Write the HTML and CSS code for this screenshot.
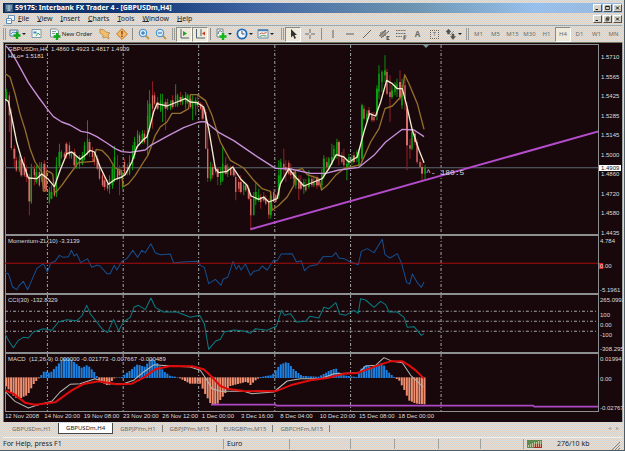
FILE: index.html
```html
<!DOCTYPE html>
<html lang="en">
<head>
<meta charset="utf-8">
<title>59175: Interbank FX Trader 4 - [GBPUSDm,H4]</title>
<link rel="stylesheet" href="styles.css">
</head>
<body>
<header class="titlebar">
  <svg class="app-icon" viewBox="0 0 8 8"><path d="M0 0h8v8H0z" fill="#3c5c7c"/><path d="M1 2h6M1 4h6M2 6h4M4 1v6" stroke="#a8c8d8" stroke-width="1"/></svg>
  <h1>59175: Interbank FX Trader 4 - [GBPUSDm,H4]</h1>
  <div class="winbtns">
    <button aria-label="Minimize"><svg viewBox="0 0 9 8"><path d="M2 6h3" stroke="#000" stroke-width="1.4"/></svg></button>
    <button aria-label="Maximize"><svg viewBox="0 0 9 8"><path d="M2 2h5v4H2zM2 1.6h5" fill="none" stroke="#000"/></svg></button>
    <button aria-label="Close"><svg viewBox="0 0 9 8"><path d="M2.500 2l4 4M6.500 2l-4 4" stroke="#000" stroke-width="1.2"/></svg></button>
  </div>
</header>
<nav class="menubar">
  <svg class="doc-icon" viewBox="0 0 9 9"><path d="M2.500 .5h6v5h-6z" fill="#eef4f8" stroke="#6c94b4"/><path d="M.5 3.500h5v5h-5z" fill="#fff" stroke="#5c8cb4"/><path d="M1.500 6l1-1 1 1 1-1" fill="none" stroke="#4878a0" stroke-width=".7"/></svg>
  <a href="#"><u>F</u>ile</a><a href="#"><u>V</u>iew</a><a href="#"><u>I</u>nsert</a><a href="#"><u>C</u>harts</a><a href="#"><u>T</u>ools</a><a href="#"><u>W</u>indow</a><a href="#"><u>H</u>elp</a>
  <div class="winbtns">
    <button aria-label="Minimize chart"><svg viewBox="0 0 9 8"><path d="M2 6h3" stroke="#000" stroke-width="1.4"/></svg></button>
    <button aria-label="Restore chart"><svg viewBox="0 0 9 8"><path d="M3.500 1.500h3v3h-3zM2.500 3.500h3v3h-3z" fill="#d4d0c8" stroke="#000" stroke-width=".8"/></svg></button>
    <button aria-label="Close chart"><svg viewBox="0 0 9 8"><path d="M2.500 2l4 4M6.500 2l-4 4" stroke="#000" stroke-width="1.2"/></svg></button>
  </div>
</nav>
<div class="toolbar">
  <div class="group files">
    <i class="grip"></i>
    <button class="drop" aria-label="New chart"><svg viewBox="0 0 12 12"><path d="M1 2h8v6H1z" fill="#dceaf2" stroke="#5c7c94"/><path d="M2 6l2-2 2 1 2-2" fill="none" stroke="#5c94c4"/><path d="M8 4v7M4.500 7.500h7" stroke="#10a818" stroke-width="2.4"/></svg></button>
    <button aria-label="Profiles"><svg viewBox="0 0 12 12"><path d="M1 1.500h9v8H1z" fill="#f4f4ec" stroke="#7c9cac"/><path d="M2.500 3.500h3v2h-3z" fill="#3c8cc8"/><path d="M5 8l2-3 2 2" fill="none" stroke="#38a860"/></svg></button>
    <button class="order"><svg viewBox="0 0 12 12"><path d="M1.500 1h6l2 2v6h-8z" fill="#f4f4f0" stroke="#8494a0"/><path d="M3 3.500h4M3 5.500h3" stroke="#7c9cb8"/><path d="M8 5v7M4.500 8.500h7" stroke="#10a818" stroke-width="2.4"/></svg>New Order</button>
    <button aria-label="Expert list"><svg viewBox="0 0 12 12"><path d="M1 1l4 1 2 2 4 1-2 2 1 4-3-2-3 1V7L1 5z" fill="#f0c070" stroke="#b88440" stroke-width=".8"/></svg></button>
    <button aria-label="Expert advisors"><svg viewBox="0 0 12 12"><path d="M6 .6L11.400 6 6 11.400 .6 6z" fill="#f4b868" stroke="#c07828"/><path d="M6 3v3.500M6 7.500V9" stroke="#8c4410" stroke-width="1.500"/></svg></button>
    <i class="sep"></i>
    <button aria-label="Zoom in"><svg viewBox="0 0 12 12"><path d="M7.500 7.500L11 11" stroke="#c8984c" stroke-width="2"/><circle cx="5" cy="5" r="3.800" fill="#d4ecfc" stroke="#3c88c8"/><path d="M5 3v4M3 5h4" stroke="#2468a8"/></svg></button>
    <button aria-label="Zoom out"><svg viewBox="0 0 12 12"><path d="M7.500 7.500L11 11" stroke="#c8984c" stroke-width="2"/><circle cx="5" cy="5" r="3.800" fill="#d4ecfc" stroke="#3c88c8"/><path d="M3 5h4" stroke="#2468a8"/></svg></button>
  </div>
  <div class="group views">
    <i class="grip"></i>
    <button class="on" aria-label="Auto scroll"><svg viewBox="0 0 12 12"><path d="M3 1v9h8" fill="none" stroke="#4c6470"/><path d="M5 3l4 2.500L5 8z" fill="#20a030"/></svg></button>
    <button class="on" aria-label="Chart shift"><svg viewBox="0 0 12 12"><path d="M2.500 1v9H11M7 1v7" fill="none" stroke="#4c6470"/><path d="M11 3.500L8 5.500l3 2z" fill="#c83020"/></svg></button>
    <i class="sep"></i>
    <button class="drop" aria-label="Indicators"><svg viewBox="0 0 12 12"><path d="M2 1h6v8H2z" fill="#f0f0ec" stroke="#748894"/><path d="M3 6c1-4 2-4 4-2" fill="none" stroke="#4c6474"/><path d="M8 5v7M4.500 8.500h7" stroke="#10b818" stroke-width="2.4"/></svg></button>
    <button class="drop" aria-label="Periods"><svg viewBox="0 0 12 12"><circle cx="6" cy="6" r="4.600" fill="#f4f8fc" stroke="#2468b8" stroke-width="1.800"/><path d="M6 3v3h2.500" fill="none" stroke="#34546c"/></svg></button>
    <button class="drop" aria-label="Templates"><svg viewBox="0 0 12 12"><path d="M1 1.500h10v8.500H1z" fill="#f4f4f0" stroke="#6c8ca4"/><path d="M1 2.500h10" stroke="#4c84bc" stroke-width="1.500"/><path d="M2.500 6l2-1 2 .5 3-1" fill="none" stroke="#c85c40"/><path d="M2.500 8.500l3-1 4 .5" fill="none" stroke="#3ca060"/></svg></button>
  </div>
  <div class="group draw">
    <i class="grip"></i>
    <button class="on" aria-label="Cursor"><svg viewBox="0 0 12 12"><path d="M4 1v8.500l2-2L7.500 11 9 10 7.500 7H10z" fill="#303030"/></svg></button>
    <button class="wide" aria-label="Crosshair"><svg viewBox="0 0 12 12"><path d="M6 1v4M6 7v4M1 6h4M7 6h4" stroke="#6c6c68"/></svg></button>
    <i class="sep"></i>
    <button aria-label="Vertical line"><svg viewBox="0 0 12 12"><path d="M6 2v8" stroke="#60605c"/></svg></button>
    <button aria-label="Horizontal line"><svg viewBox="0 0 12 12"><path d="M2 6h8" stroke="#60605c"/></svg></button>
    <button aria-label="Trendline"><svg viewBox="0 0 12 12"><path d="M2 10l8-8" stroke="#60605c"/></svg></button>
    <button aria-label="Channel"><svg viewBox="0 0 12 12"><path d="M1 8l7-6M3 10l8-7M3 4v5M5 3v6M7 2v6" stroke="#60605c"/><path d="M9 8v4M9 8.500h2.500M9 10h2M9 11.500h2.500" stroke="#404040" stroke-width=".8"/></svg></button>
    <button aria-label="Fibonacci"><svg viewBox="0 0 12 12"><path d="M1 2.500h10M1 5.500h10M1 8.500h6" stroke="#60605c" stroke-dasharray="1 .6"/><path d="M9 7.500V12M9 8h2.500M9 10h2" stroke="#404040" stroke-width=".8"/></svg></button>
    <button aria-label="Text"><b>A</b></button>
    <button aria-label="Text label"><span class="tlabel">T</span></button>
    <button class="drop" aria-label="Arrows"><svg viewBox="0 0 12 12"><path d="M3.500 1l2.500 3H4.500v2H2.500V4H1zM9 6v2.500h1.500L8 11.500 5.500 8.500H7V6zM5 7l4-4" fill="#50504c" stroke="#50504c" stroke-width=".5"/></svg></button>
  </div>
  <div class="group frames">
    <i class="grip"></i>
    <button>M1</button><button>M5</button><button>M15</button><button>M30</button><button>H1</button><button class="on">H4</button><button>D1</button><button>W1</button><button>MN</button>
  </div>
</div>

<main class="chart">
  <section class="panel price">
    <div class="plot">
      <svg id="price" viewBox="15 9 1776 567" preserveAspectRatio="none"></svg>
      <p class="legend">GBPUSDm,H4&nbsp; 1.4860 1.4923 1.4817 1.4909<br>HiLo= 1.5181</p>
      <span class="pips">^- 180:5</span>
      <i class="shift"></i>
    </div>
    <div class="axis"><span>1.5710</span><span>1.5565</span><span>1.5425</span><span>1.5285</span><span>1.5145</span><span>1.5000</span><span>1.4860</span><span>1.4720</span><span>1.4580</span><span>1.4435</span><b class="now">1.4909</b></div>
  </section>
  <section class="panel sub">
    <div class="plot">
      <svg id="momentum" viewBox="15 12 1776 171" preserveAspectRatio="none"></svg>
      <p class="legend">Momentum-ZL(10) -3.3139</p>
    </div>
    <div class="axis"><span>4.784</span><span class="zero">0.00</span><span>-5.1961</span></div>
  </section>
  <section class="panel sub">
    <div class="plot">
      <svg id="cci" viewBox="15 189 1776 171" preserveAspectRatio="none"></svg>
      <p class="legend">CCI(30) -132.8329</p>
    </div>
    <div class="axis"><span>265.0992</span><div class="levels"><span>100</span><span>0.00</span><span>-100</span></div><span>-308.295</span></div>
  </section>
  <section class="panel sub last">
    <div class="plot">
      <svg id="macd" viewBox="15 366 1776 171" preserveAspectRatio="none"></svg>
      <p class="legend">MACD&nbsp; (12,26,9) 0.000000 -0.021773 -0.007667 -0.000489</p>
    </div>
    <div class="axis macd"><span>0.01994</span><span class="mid">0.00</span><span>-0.02767</span></div>
  </section>
  <div class="dates"><span>12 Nov 2008</span><span>14 Nov 20:00</span><span>19 Nov 08:00</span><span>23 Nov 20:00</span><span>26 Nov 12:00</span><span>1 Dec 00:00</span><span>3 Dec 16:00</span><span>8 Dec 04:00</span><span>10 Dec 20:00</span><span>15 Dec 08:00</span><span>18 Dec 00:00</span></div>
</main>

<nav class="tabs">
  <button>GBPUSDm,H1</button><button class="active">GBPUSDm,H4</button><button>GBPJPYm,H1</button><button>GBPJPYm,M15</button><button>EURGBPm,M15</button><button>GBPCHFm,M15</button>
  <span class="scroll"><button aria-label="Scroll left">◂</button><button aria-label="Scroll right">▸</button></span>
</nav>
<footer class="status">
  <span>For Help, press F1</span><span>Euro</span><span></span><span></span><span></span><span></span><span></span>
  <span class="net"><svg viewBox="0 0 15 8"><path d="M0 0h15v8H0z" fill="#5c8c50"/><path d="M7 8V4h8v4z" fill="#b02828"/><path d="M1.500 7V5M3.500 7V4M5.500 7V3M7.500 7V2M9.500 7V2M11.500 7V1M13.500 7V1" stroke="#e8e0c0" stroke-width=".7"/></svg>276/10 kb</span>
  <svg class="resize" viewBox="0 0 8 8"><path d="M0 8l8-8M3 8l5-5M6 8l2-2" stroke="#84847c"/></svg>
</footer>
<script src="chart.js"></script>
</body>
</html>
```
FILE: styles.css
```css
* { box-sizing: border-box; }

:root {
  --dither: repeating-conic-gradient(#f0dcc8 0 25%, #ccd4d8 0 50%) 0 0 / 2px 2px;
  --face: #d6d3cb;
  --bg: #18080c;
  --frame: #8c9090;
}

body {
  margin: 0;
  height: 100vh;
  display: flex;
  flex-direction: column;
  padding: 3px 2px 0 3px;
  border-right: 1px solid #505c64;
  border-bottom: 1px solid #505c64;
  background: var(--dither);
  color: #20262a;
  font: 7px/8px "Noto Sans", "Liberation Sans", sans-serif;
  overflow: hidden;
}

button {
  margin: 0;
  padding: 0;
  border: 0;
  background: none;
  color: inherit;
  font: inherit;
}

/* title and menu */
.titlebar {
  flex: none;
  height: 10px;
  display: flex;
  align-items: center;
  gap: 2px;
  padding-left: 2px;
  background: linear-gradient(90deg, #0c2c60, #123878 22%, #4468a4 42%, #6c94b0 66%, #98c0ec 86%, #98b8dc);
  color: #fff;
}
.titlebar h1 { margin: 0; font-size: 7px; line-height: 10px; font-weight: 700; white-space: nowrap; }
.app-icon { width: 8px; height: 8px; }
.winbtns { margin-left: auto; display: flex; gap: 1px; }
.winbtns button { width: 9px; height: 8px; background: var(--face); border: 1px solid; border-color: #fff #50504c #50504c #fff; }
.winbtns svg { display: block; width: 7px; height: 6px; }
.menubar {
  flex: none;
  height: 13px;
  display: flex;
  align-items: center;
  gap: 8px;
  padding-left: 3px;
  border-bottom: 1px solid #a4a8a4;
}
.menubar a { color: inherit; text-decoration: none; }
.menubar u { text-decoration-thickness: 1px; text-underline-offset: 0; }
.doc-icon { width: 9px; height: 9px; margin-right: -5px; }

/* toolbar */
.toolbar { flex: none; height: 16px; display: flex; align-items: center; font-size: 6px; }
.group { display: flex; align-items: center; height: 16px; }
.files { width: 169px; }
.views { width: 109px; }
.draw { width: 185px; }
.grip { flex: none; width: 3px; height: 12px; margin-right: 1px; border: solid #9c9c98; border-width: 0 1px; }
.sep { flex: none; width: 1px; height: 12px; margin: 0 2px; background: #8c8c88; }
.toolbar button { flex: none; width: 17px; height: 15px; display: flex; align-items: center; justify-content: center; color: #6c6c68; }
.toolbar svg { flex: none; width: 12px; height: 12px; }
.toolbar .drop { width: 21px; gap: 1px; }
.drop::after { content: ""; border: 2px solid transparent; border-top-color: #202020; border-bottom: 0; }
.toolbar .order { width: 51px; gap: 1px; color: #20262a; }
.toolbar .wide { width: 18px; }
.toolbar .on { width: 16px; background: #efe9da; border: 1px solid; border-color: #8c8c84 #fff #fff #8c8c84; }
.toolbar b { font-size: 8px; }
.tlabel { border: 1px dotted #60605c; width: 9px; height: 9px; line-height: 7px; }
.frames { flex: 1; }

/* chart */
.chart {
  flex: 1;
  min-height: 0;
  display: flex;
  flex-direction: column;
  margin-right: -1px;
  padding: 2px 0 1px 2px;
  background: var(--bg);
  border-right: 1px solid #a0a4a4;
  box-shadow: inset 1px 1px #707870;
  color: #dcdcdc;
  font-family: "Liberation Sans", sans-serif;
  font-size: 6px;
}
.panel { display: flex; min-height: 0; }
.price { flex: 192 1 0; }
.sub { flex: 59 1 0; }
.last { flex-grow: 58; }
.plot {
  flex: 1;
  min-width: 0;
  position: relative;
  border-bottom: 2px solid var(--frame);
  border-right: 1px solid var(--frame);
  box-shadow: inset 1px 0 var(--frame);
}
.price .plot { border-top: 1px solid var(--frame); }
.last .plot { border-bottom-width: 1px; }
.plot svg { display: block; width: 100%; height: 100%; }
.legend { position: absolute; left: 3px; top: 2px; margin: 0; line-height: 7px; white-space: nowrap; }
.price .legend { top: 1px; }
.pips { position: absolute; left: 71%; top: 65%; font: 8px/9px "Liberation Mono", monospace; white-space: pre; }
.shift { position: absolute; left: 70.500%; top: 0; border: 3px solid transparent; border-top-color: #7c949c; border-bottom: 0; }
.axis {
  flex: none;
  width: 23px;
  position: relative;
  display: flex;
  flex-direction: column;
  justify-content: space-between;
  padding: 2px 0 2px 2px;
  line-height: 6px;
}
.price .axis { padding: 10px 0 0 2px; }
.sub .axis { z-index: 0; padding-left: 1px; font-family: "Liberation Sans Narrow", "Liberation Sans", sans-serif; }
.axis.macd { padding-bottom: 1px; }
.axis .mid { margin-bottom: 10px; }
.now { position: absolute; left: 0; top: 63%; width: 22px; padding-left: 2px; background: #fff; color: #101010; font-weight: 400; }
.zero { position: relative; }
.zero::before { content: ""; position: absolute; left: -1px; top: 0; width: 4px; height: 6px; background: #e02020; z-index: -1; }
.levels { display: flex; flex-direction: column; gap: 4px; }
.dates {
  flex: none;
  height: 9px;
  display: grid;
  grid-template-columns: repeat(15, 1fr);
  margin-right: 27px;
  line-height: 9px;
  white-space: nowrap;
}
.dates span { width: 0; background: linear-gradient(var(--frame), var(--frame)) 0 0 / 1px 2px no-repeat; }

/* tabs and status */
.tabs { flex: none; height: 15px; display: flex; align-items: flex-start; padding: 1px 0 0 2px; color: #6c6c68; font-size: 6px; }
.tabs > button { height: 11px; padding: 0 7px; position: relative; }
.tabs > button:not(.active)::after { content: ""; position: absolute; right: 0; top: 2px; height: 7px; border-right: 1px solid #80807c; }
.tabs > button:first-child::after { display: none; }
.tabs > .active { background: #fff; color: #202020; border: solid #484844; border-width: 0 1px 1px; }
.scroll { margin-left: auto; color: #a4a8a8; display: flex; gap: 5px; padding: 1px 3px; }
.status {
  flex: none;
  height: 13px;
  display: grid;
  grid-template-columns: minmax(0, 1fr) 66px 61px 44px 44px 42px 43px 88px 10px;
  align-items: center;
  border-top: 1px solid #f4f0e8;
}
.status > span { height: 10px; line-height: 10px; border-right: 1px solid #a0a09c; white-space: nowrap; }
.status > span + span { padding-left: 3px; }
.status > .net { display: flex; align-items: center; gap: 15px; border: 0; }
.net svg { width: 15px; height: 8px; }
.resize { width: 8px; height: 8px; align-self: end; }
```
FILE: chart.js
```js
// Chart units: three per pixel at the default window size.
const NS = "http://www.w3.org/2000/svg";
const GRID = [142, 369, 595, 823, 1050, 1321];

function add(svg, tag, attrs) {
  const el = document.createElementNS(NS, tag);
  for (const k in attrs) el.setAttribute(k, attrs[k]);
  svg.appendChild(el);
}
function line(svg, points, color, width = 3) {
  add(svg, "polyline", { points, fill: "none", stroke: color, "stroke-width": width, "stroke-linejoin": "round" });
}
function grid(svg) {
  const [, y, , h] = svg.getAttribute("viewBox").split(" ").map(Number);
  for (const x of GRID) {
    add(svg, "path", { d: `M${x} ${y}V${y + h}`, stroke: "#a0a8a8", "stroke-width": 3, "stroke-dasharray": "9 6 3 6" });
  }
}

// high, body top, body bottom, low (screen units), then + for a rising candle
const candles = `140 150 175 175+,150 160 220 270,200 220 318 325,310 320 350 375,345 355 385 390,340 355 385 390+,345 352 400 405,345 365 400 405,370 380 405 420,395 405 478 520,365 380 480 485+,370 380 400 430,370 390 420 425+,360 390 430 435,360 365 410 420+,355 365 440 450,375 400 445 450,435 445 482 485+,430 450 470 472+,430 440 460 465,345 370 455 465+,305 330 372 375+,325 330 345 350+,330 335 345 350,300 305 340 350,300 310 340 350,330 335 345 350+,320 330 370 380,345 352 375 380+,340 345 370 380+,330 340 365 370+,300 310 350 355+,235 290 330 340+,290 300 330 345,315 325 345 360,330 335 360 370,340 350 380 385,365 375 410 415,390 400 430 435,400 415 435 445,415 425 440 448,400 410 440 455+,370 380 430 440+,312 345 415 420+,340 380 410 415,370 385 400 460,390 405 435 440+,350 360 395 400,365 375 380 400,340 360 395 400+,310 330 370 385+,285 300 340 350+,265 275 310 320+,270 280 300 310,265 275 300 305+,265 275 300 305,175 220 310 340+,145 185 260 270+,118 160 200 260,150 160 185 190,165 180 200 205,155 175 205 210+,155 180 205 240+,170 180 200 265,170 180 200 205+,175 185 200 205+,160 175 195 200,127 160 190 195+,155 160 190 195+,150 165 180 190,160 165 185 190+,150 160 185 200+,155 160 180 185+,160 170 195 200,160 180 200 235+,165 175 190 220+,160 180 190 200,180 185 200 205,185 195 230 235,200 210 320 320,240 320 408 420,360 375 410 418+,365 375 400 410,370 380 390 395,375 380 405 430,375 390 420 430+,312 365 415 420+,345 370 395 400,365 375 395 405+,370 380 400 400,370 380 400 405,390 405 450 475,410 420 440 450,400 420 450 455,420 430 445 460+,425 430 445 450,430 440 470 475,460 470 520 565,450 470 520 520+,420 450 475 490+,440 460 475 480+,455 465 480 500,450 465 475 480,460 470 485 490,470 480 518 530,450 460 520 530+,440 450 480 480,455 460 480 480,355 400 460 470+,350 360 420 425+,320 365 380 400,355 375 385 420,355 362 395 400,365 378 400 410,380 390 410 425,390 400 430 440+,400 410 440 475,400 420 440 445,410 420 435 455+,410 430 445 450,385 410 435 440+,400 410 430 435,400 420 430 435+,400 405 430 440,410 415 430 435,380 395 430 440+,340 350 400 410+,345 360 375 390,345 350 380 385+,305 345 365 370+,310 320 345 350+,290 300 340 350+,295 300 340 370,330 345 360 365,320 350 370 380,350 365 380 415+,335 345 370 375+,340 350 360 370+,330 340 360 365,325 330 350 360+,320 330 370 375+,185 190 350 360+,190 200 230 235,205 215 235 240+,195 205 220 230,210 215 235 240,210 225 235 240,130 140 220 235+,70 95 150 170+,85 90 120 150+,40 85 100 120+,80 90 155 160,100 150 165 240,130 145 165 170+,120 130 150 160+,110 125 140 165+,85 120 165 175,110 130 190 200+,110 130 170 205,180 200 310 385,290 310 320 350,260 270 320 325+,265 275 300 310,290 300 360 365,350 360 375 375,360 375 395 415,368 378 395 412+`.split(",");

const price = document.getElementById("price");
grid(price);
add(price, "path", { d: "M15 377H1791", stroke: "#5c6870", "stroke-width": 3 });
candles.forEach((c, i) => {
  const up = c.endsWith("+");
  const [hi, top, bottom, lo] = c.replace("+", "").split(" ").map(Number);
  const x = Math.round((18 + i * 7.55) / 3) * 3 + 1;
  add(price, "path", { d: `M${x} ${hi}V${lo}`, stroke: up ? "#0c900c" : "#942024", "stroke-width": 3 });
  add(price, "path", { d: `M${x} ${top}V${bottom}`, stroke: up ? "#0ca010" : "#d86c68", "stroke-width": i % 3 ? 4 : 6 });
});
line(price, "15,95 30,105 45,155 60,215 75,262 90,320 105,360 125,390 130,447 136,447 139,388 150,390 158,397 163,450 170,448 185,430 205,402 235,362 280,358 288,322 305,325 325,345 345,378 363,385 369,434 385,425 405,400 430,360 443,340 450,322 465,280 480,255 500,240 515,214 540,214 565,200 570,158 590,158 615,175 635,220 660,300 690,355 730,378 760,415 785,440 810,448 815,505 835,490 860,465 880,430 885,385 905,380 920,398 955,410 963,444 980,430 1005,400 1030,380 1080,368 1110,300 1135,260 1153,200 1175,192 1203,162 1212,98 1225,125 1250,185 1270,262", "#94702c", 4);
line(price, "18,12 30,25 50,58 85,122 115,165 143,203 160,224 185,240 210,249 243,268 265,272 290,284 320,303 345,320 365,329 390,331 435,324 450,311 500,283 550,257 595,240 615,239 655,271 700,296 770,344 825,379 870,381 930,394 975,394 1015,384 1075,376 1120,340 1155,300 1205,262 1240,264 1270,284", "#c890d8", 4);
line(price, "15,172 25,178 35,225 50,300 65,352 85,408 110,410 125,396 145,412 163,434 180,385 200,335 215,330 240,352 255,340 270,325 283,330 300,375 325,427 345,412 365,405 375,398 395,360 410,315 430,292 440,285 450,250 460,210 470,185 500,192 530,180 555,170 570,180 590,182 610,195 625,260 645,380 655,392 680,388 697,375 720,410 740,430 752,462 775,472 790,465 805,480 830,470 840,425 865,380 885,405 910,432 940,420 965,410 985,380 1007,338 1030,345 1045,360 1070,345 1090,270 1107,215 1125,222 1140,180 1158,115 1175,125 1190,140 1205,140 1218,190 1235,265 1255,325 1270,362", "#f4ecd0", 4);
line(price, "750,562 1793,268", "#b44ccc", 6);

const momentum = document.getElementById("momentum");
grid(momentum);
line(momentum, "15,122 25,125 38,165 50,173 58,160 70,148 83,173 95,145 110,110 130,95 142,120 152,93 165,88 178,70 190,76 205,74 214,55 222,72 230,66 242,92 262,80 275,106 290,100 300,102 320,125 330,125 342,100 350,114 365,88 380,80 398,55 412,76 425,55 435,62 452,35 465,62 480,68 510,66 520,93 545,90 590,88 600,100 612,106 625,155 645,142 662,160 668,142 682,136 698,88 708,112 715,100 722,114 735,96 750,130 760,118 775,115 785,102 800,114 820,84 830,86 842,66 875,65 888,90 902,86 912,116 927,102 950,98 968,74 995,73 1006,62 1015,78 1030,80 1050,90 1073,98 1082,58 1100,50 1120,62 1145,22 1153,68 1168,78 1190,65 1203,95 1218,152 1227,156 1235,126 1250,152 1262,166 1270,150", "#145090", 3);
add(momentum, "path", { d: "M15 94H1791", stroke: "#a80c0c", "stroke-width": 3 });

const cci = document.getElementById("cci");
grid(cci);
for (const y of [238, 268, 298]) {
  add(cci, "path", { d: `M15 ${y}H1791`, stroke: "#a0a8a8", "stroke-width": 3, "stroke-dasharray": "9 6 3 6" });
}
line(cci, "15,305 25,325 40,347 55,325 70,316 85,318 100,300 130,290 155,295 175,270 200,263 230,266 245,252 260,220 270,245 290,270 305,290 322,302 340,262 355,296 370,270 390,256 402,225 415,220 435,233 452,198 465,226 490,240 530,240 570,256 598,250 612,275 625,352 645,328 660,322 672,300 700,294 730,297 750,304 765,290 800,295 828,283 843,235 852,250 870,245 888,270 915,268 928,253 955,258 970,226 985,230 1006,212 1017,246 1035,250 1060,235 1073,244 1080,200 1095,204 1120,226 1140,208 1155,218 1165,240 1190,240 1210,256 1220,286 1240,284 1262,310 1270,305", "#087c84", 3);

const macd = document.getElementById("macd");
grid(macd);
// histogram key values [x, height]; bars between them are interpolated
const keys = [[15,-22],[45,-60],[60,-62],[83,-52],[100,-20],[118,0],[133,20],[150,14],[170,35],[190,58],[210,58],[230,40],[245,30],[262,38],[280,20],[292,2],[300,-12],[325,-25],[340,-2],[365,2],[372,8],[390,22],[412,40],[435,32],[452,60],[470,45],[490,20],[510,5],[528,3],[545,-5],[570,-18],[600,-18],[615,-50],[632,-80],[652,-78],[672,-50],[690,-25],[710,-20],[740,-12],[750,-22],[765,-8],[780,2],[815,8],[840,40],[860,48],[880,25],[905,5],[955,3],[985,20],[1006,28],[1020,8],[1070,2],[1080,25],[1095,38],[1115,30],[1145,45],[1160,20],[1180,2],[1195,-8],[1210,-35],[1225,-68],[1245,-78],[1275,-80]];
for (let i = 0; i < 167; i++) {
  const x = 18 + i * 7.55;
  const k = keys.findIndex(p => p[0] > x);
  const [a, b] = [keys[k - 1], keys[k]];
  const h = a[1] + (b[1] - a[1]) * (x - a[0]) / (b[0] - a[0]);
  add(macd, "path", { d: `M${x} ${h > 0 ? 438 : 436}V${Math.round(437 - h)}`, stroke: h > 0 ? "#1c80e0" : "#f09070", "stroke-width": 6 });
}
line(macd, "15,478 45,508 85,528 110,520 155,508 180,480 210,457 240,455 285,440 325,455 370,455 400,445 430,420 462,398 510,402 570,405 600,415 620,445 635,470 660,478 730,478 755,485 820,480 860,447 900,440 960,440 1000,425 1075,422 1095,402 1125,400 1150,377 1175,388 1205,392 1230,430 1268,465", "#b8b8b4", 3);
line(macd, "15,475 40,485 75,512 105,518 165,511 215,475 250,456 295,448 350,457 395,455 430,437 465,412 510,402 575,403 610,412 635,435 660,462 680,470 730,477 825,478 870,460 930,445 980,438 1030,425 1070,423 1100,412 1140,397 1170,388 1205,388 1225,400 1245,415 1270,440", "#e00c0c", 6);
line(macd, "632,518 825,518 828,521 1597,521 1600,524 1793,524", "#ac48c4", 5);
```
